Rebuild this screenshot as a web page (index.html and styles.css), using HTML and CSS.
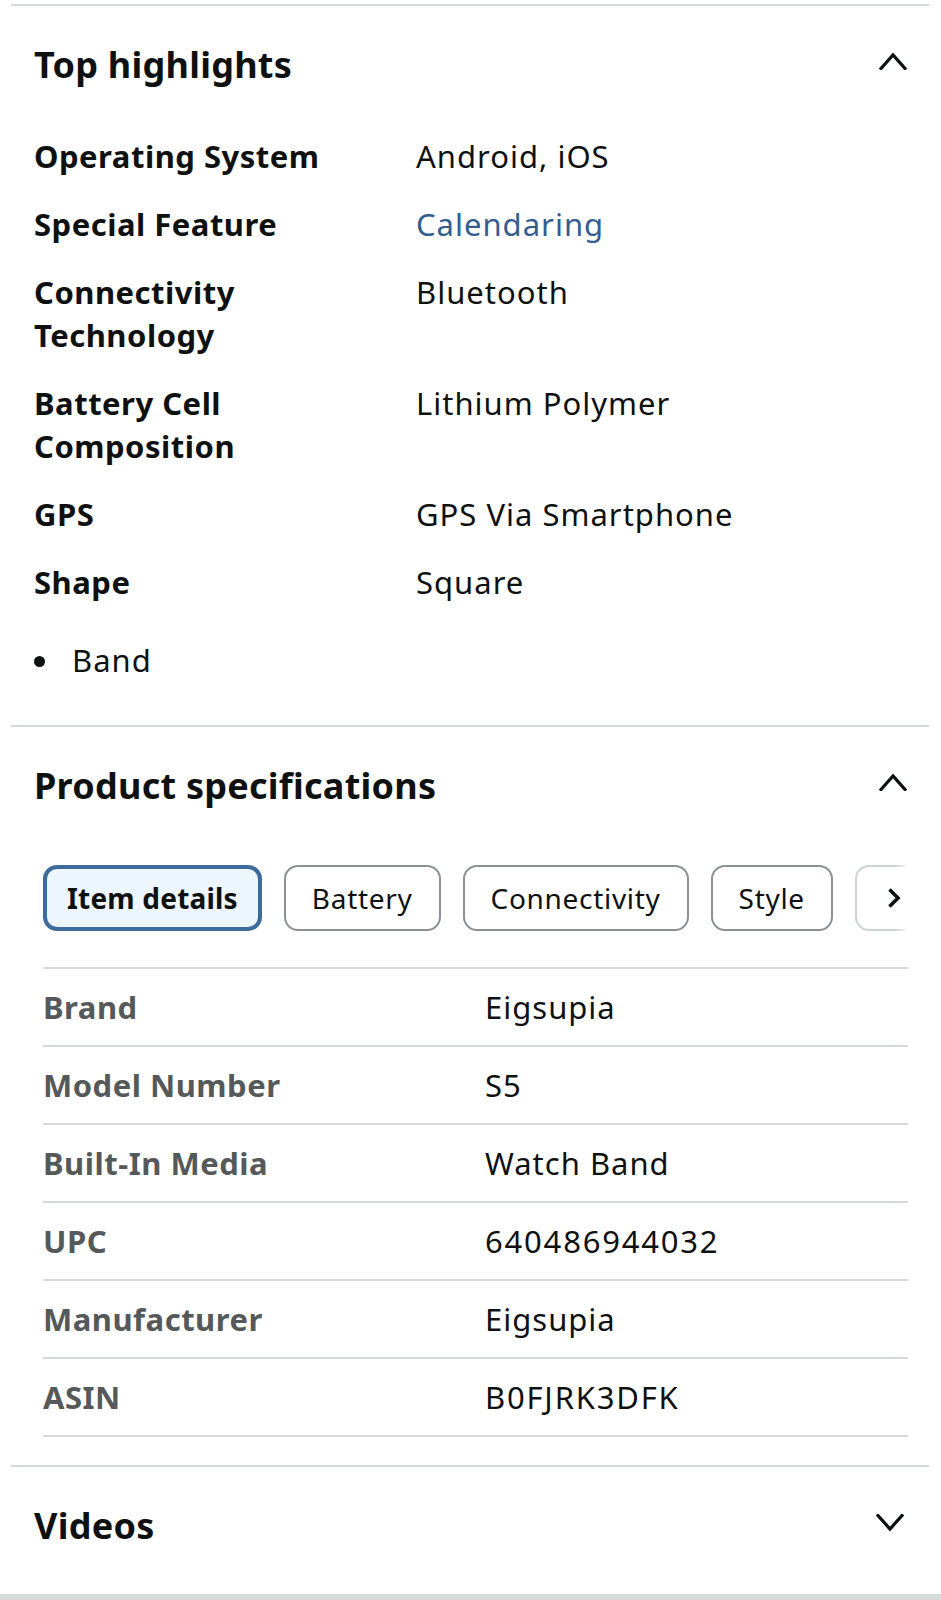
FILE: index.html
```html
<!DOCTYPE html>
<html lang="en">
<head>
<meta charset="utf-8">
<title>Product details</title>
<link rel="stylesheet" href="styles.css">
</head>
<body>
<div class="page">
  <section class="sec">
    <div class="sec-head">
      <h2 class="sec-title">Top highlights</h2>
      <svg class="chev" viewBox="0 0 28 18" width="28" height="18"><path d="M2 16.5 L14 3 L26 16.5" fill="none" stroke="#0f1111" stroke-width="3.2" stroke-linecap="square"/></svg>
    </div>
    <div class="hl">
      <div class="hl-row"><div class="hl-k">Operating System</div><div class="hl-v">Android, iOS</div></div>
      <div class="hl-row"><div class="hl-k">Special Feature</div><div class="hl-v link">Calendaring</div></div>
      <div class="hl-row"><div class="hl-k">Connectivity<br>Technology</div><div class="hl-v">Bluetooth</div></div>
      <div class="hl-row"><div class="hl-k">Battery Cell<br>Composition</div><div class="hl-v">Lithium Polymer</div></div>
      <div class="hl-row"><div class="hl-k">GPS</div><div class="hl-v">GPS Via Smartphone</div></div>
      <div class="hl-row"><div class="hl-k">Shape</div><div class="hl-v">Square</div></div>
    </div>
    <ul class="bullets"><li>Band</li></ul>
  </section>

  <section class="sec specs">
    <div class="sec-head">
      <h2 class="sec-title">Product specifications</h2>
      <svg class="chev" viewBox="0 0 28 18" width="28" height="18"><path d="M2 16.5 L14 3 L26 16.5" fill="none" stroke="#0f1111" stroke-width="3.2" stroke-linecap="square"/></svg>
    </div>
    <div class="chips-wrap">
      <div class="chips">
        <div class="chip active">Item details</div>
        <div class="chip">Battery</div>
        <div class="chip">Connectivity</div>
        <div class="chip">Style</div>
        <div class="chip next"><svg class="next-ico" viewBox="0 0 14 22" width="14" height="22"><path d="M2.5 2.5 L11 11 L2.5 19.5" fill="none" stroke="#0f1111" stroke-width="3.6"/></svg></div>
      </div>
      <div class="fade"></div>
    </div>
    <div class="spec">
      <div class="spec-row"><div class="spec-k">Brand</div><div class="spec-v">Eigsupia</div></div>
      <div class="spec-row"><div class="spec-k">Model Number</div><div class="spec-v">S5</div></div>
      <div class="spec-row"><div class="spec-k">Built-In Media</div><div class="spec-v">Watch Band</div></div>
      <div class="spec-row"><div class="spec-k">UPC</div><div class="spec-v num">640486944032</div></div>
      <div class="spec-row"><div class="spec-k">Manufacturer</div><div class="spec-v">Eigsupia</div></div>
      <div class="spec-row"><div class="spec-k">ASIN</div><div class="spec-v num">B0FJRK3DFK</div></div>
    </div>
  </section>

  <section class="sec last">
    <div class="sec-head">
      <h2 class="sec-title">Videos</h2>
      <svg class="chev down" viewBox="0 0 28 18" width="28" height="18"><path d="M2 1.5 L14 15 L26 1.5" fill="none" stroke="#0f1111" stroke-width="3.2" stroke-linecap="square"/></svg>
    </div>
  </section>
  <div class="bottom-bar"></div>
</div>
</body>
</html>
```

FILE: styles.css
```css
* { box-sizing: border-box; }
html, body { margin: 0; padding: 0; background: #fff; }
body {
  font-family: "Noto Sans", "Open Sans", "DejaVu Sans", sans-serif;
  color: #0f1111;
  width: 941px;
  height: 1600px;
  overflow: hidden;
}
.page { padding-top: 4px; }
.sec {
  margin: 0 12px 0 11px;
  border-top: 2px solid #d5d9d9;
  padding: 37px 21px 0 23px;
}
.sec-head {
  display: flex;
  align-items: center;
  justify-content: space-between;
  height: 44px;
}
.sec-title {
  margin: 0;
  font-size: 36px;
  font-weight: 700;
  line-height: 44px;
  letter-spacing: 0.25px;
}
.chev { margin-right: 1px; margin-top: -8px; }
.chev.down { margin-top: -6px; margin-right: 4px; }

.hl { margin-top: 48px; display: flex; flex-direction: column; gap: 25px; }
.hl-row { display: grid; grid-template-columns: 382px 1fr; font-size: 31px; line-height: 43px; }
.hl-k { font-weight: 700; letter-spacing: 0.5px; }
.hl-v { font-weight: 400; letter-spacing: 1px; }
.link { color: #335d8f; }

.bullets {
  list-style: none;
  margin: 35px 0 0;
  padding: 0 0 43px 0;
  font-size: 31px;
  line-height: 43px;
  letter-spacing: 1px;
}
.bullets li { display: flex; align-items: center; }
.bullets li::before {
  content: "";
  width: 11px;
  height: 11px;
  border-radius: 50%;
  background: #0f1111;
  margin-right: 27px;
  margin-top: 2px;
}

.chips-wrap { position: relative; margin-top: 57px; margin-left: 9px; width: 865px; }
.chips { display: flex; gap: 22px; overflow: hidden; width: 865px; }
.chip {
  flex: none;
  height: 66px;
  padding: 0 26px;
  border: 2px solid #8d9096;
  border-radius: 14px;
  display: flex;
  align-items: center;
  font-size: 28px;
  letter-spacing: 0.7px;
  background: #fff;
}
.chip.active {
  border: 4px solid #3d6b9c;
  background: #edf5fd;
  font-weight: 700;
  letter-spacing: 0.2px;
  padding: 0 20px;
}
.chip.next { width: 80px; padding: 0 0 0 30px; border-color: #cfd2d2; }
.next-ico { position: relative; z-index: 2; }
.fade {
  position: absolute;
  right: 0; top: 0;
  width: 12px; height: 66px;
  z-index: 1;
  background: linear-gradient(to right, rgba(255,255,255,0), #fff);
}

.spec { margin: 36px 0 0 9px; width: 865px; border-top: 2px solid #d5d9d9; }
.spec-row {
  display: grid;
  grid-template-columns: 442px 1fr;
  height: 78px;
  align-items: center;
  border-bottom: 2px solid #d5d9d9;
  font-size: 31px;
}
.spec-k { font-weight: 700; color: #565959; letter-spacing: 0.5px; }
.spec-v { color: #0f1111; letter-spacing: 1px; }
.spec-v.num { letter-spacing: 1.8px; }
.specs { padding-bottom: 28px; }

.last { padding-bottom: 46px; }
.bottom-bar { height: 20px; background: #d5dbdb; }
```
